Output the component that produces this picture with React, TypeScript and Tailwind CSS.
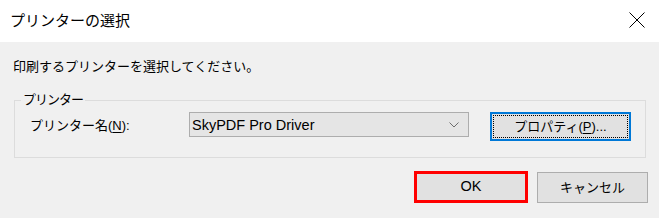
import React from 'react';

const font = "font-['Liberation_Sans','Noto_Sans_CJK_JP',sans-serif]";

function CloseIcon() {
  return (
    <svg width="16" height="16" viewBox="0 0 16 16" className="block">
      <path d="M0.5 0.5 L15.5 15.5 M15.5 0.5 L0.5 15.5" stroke="#000" strokeWidth="1" fill="none" />
    </svg>
  );
}

function Chevron() {
  return (
    <svg width="10" height="6" viewBox="0 0 10 6" className="block">
      <path d="M0.5 0.5 L5 5 L9.5 0.5" stroke="#6d6d6d" strokeWidth="1" fill="none" />
    </svg>
  );
}

export default function App() {
  return (
    <div className={`w-[659px] h-[218px] bg-[#f0f0f0] flex flex-col text-black ${font}`}>
      {/* title bar */}
      <div className="h-[42px] bg-white flex items-center justify-between pl-[10px] pr-[14px] shrink-0">
        <span className="text-[15px] leading-[20px]">プリンターの選択</span>
        <span className="-mt-[3px]">
          <CloseIcon />
        </span>
      </div>

      <div className="flex flex-col pl-[14px] pr-[13px] pt-[16px]">
        <div className="text-[13px] leading-[17px] -ml-[1px]">印刷するプリンターを選択してください。</div>

        <fieldset className="mt-[17px] border border-[#dcdcdc] px-0 pt-[4px] pb-[16px] m-0">
          <legend className="ml-[6px] px-[2px] text-[13px] leading-[16px] tracking-[-1px]">プリンター</legend>
          <div className="flex items-start pl-[15px]">
            <div className="w-[159px] h-[25px] flex items-center text-[13px] pt-[3px]">
              プリンター名(<span className="underline underline-offset-2">N</span>):
            </div>
            <div className="w-[280px] h-[25px] bg-[#e5e5e5] border border-[#adadad] flex items-center justify-between pl-[2px] pr-[9px]">
              <span className="text-[14.5px] leading-[18px] pt-[1px]">SkyPDF Pro Driver</span>
              <Chevron />
            </div>
            <button className="ml-[21px] w-[141px] h-[29px] bg-[#e1e1e1] border-2 border-[#0078d7] p-[1px] flex">
              <span className="flex-1 border border-dotted border-black flex items-center justify-center text-[13px]">
                プロパティ(<span className="underline underline-offset-2">P</span>)...
              </span>
            </button>
          </div>
        </fieldset>

        <div className="flex justify-end items-start mt-[13px] -mr-[2px]">
          <button className="w-[114px] h-[32px] bg-[#e1e1e1] border-[3px] border-[#ff0000] flex items-center justify-center text-[14.5px]">
            OK
          </button>
          <button className="ml-[9px] mt-[1px] w-[111px] h-[31px] bg-[#e1e1e1] border border-[#adadad] flex items-center justify-center text-[13px]">
            キャンセル
          </button>
        </div>
      </div>
    </div>
  );
}
